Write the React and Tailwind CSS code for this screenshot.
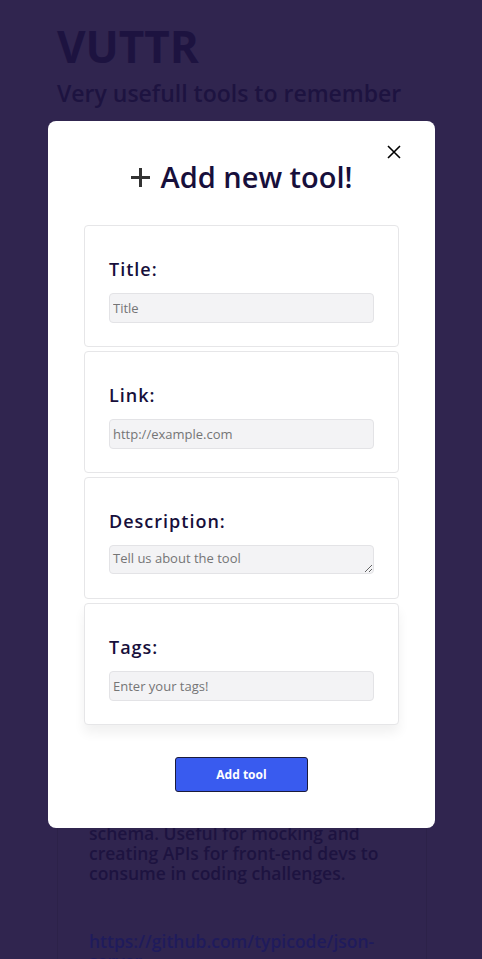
import React from 'react';

const fields = [
    { label: 'Title:', placeholder: 'Title', type: 'input' },
    { label: 'Link:', placeholder: 'http://example.com', type: 'input' },
    { label: 'Description:', placeholder: 'Tell us about the tool', type: 'textarea' },
    { label: 'Tags:', placeholder: 'Enter your tags!', type: 'input' },
];

function App() {
    return (
        <div className="relative min-h-[959px] overflow-hidden bg-[#30254f] font-['Open_Sans',sans-serif]">
            {/* page behind the overlay */}
            <div className="px-[57px] pt-[16px]">
                <h1 className="text-[44px] font-bold leading-[60px] text-[#1d1340]">VUTTR</h1>
                <h2 className="mt-[2px] text-[23px] font-semibold leading-[30px] text-[#1d1340]">Very usefull tools to remember</h2>
                <div className="mt-[695px] w-[370px] border-x border-[#2c2249] px-[31px] pb-10">
                    <p className="text-[17.5px] font-semibold leading-[20px] text-[#1d1340]">
                        Fake REST API based on a json<br />
                        schema. Useful for mocking and<br />
                        creating APIs for front-end devs to<br />
                        consume in coding challenges.
                    </p>
                    <p className="mt-[48px] text-[17.5px] font-semibold leading-[20px] text-[#1f1b5c]">
                        https://github.com/typicode/json-<br />server
                    </p>
                </div>
            </div>

            {/* modal */}
            <div className="absolute left-[48px] top-[121px] h-[707px] w-[387px] rounded-lg bg-white">
                <button className="absolute right-[34px] top-[24px] text-black">
                    <svg width="14" height="14" viewBox="0 0 14 14" fill="none" stroke="currentColor" strokeWidth="1.6">
                        <path d="M1 1l12 12M13 1L1 13" />
                    </svg>
                </button>
                <div className="flex items-center justify-center gap-[9px] pt-[36px]">
                    <svg width="21" height="21" viewBox="0 0 21 21" fill="none" stroke="#333" strokeWidth="3">
                        <path d="M10.5 1v19M1 10.5h19" />
                    </svg>
                    <h2 className="text-[29px] font-semibold leading-[40px] text-[#170f3b]">Add new tool!</h2>
                </div>

                <div className="mx-[36px] mt-[28px] flex flex-col gap-[4px]">
                    {fields.map((f, i) => (
                        <div
                            key={f.label}
                            className={`h-[122px] rounded border border-[#e6e6e8] bg-white px-[24px] pt-[31px] ${i === fields.length - 1 ? 'shadow-[0_8px_12px_rgba(0,0,0,0.06)]' : ''}`}
                        >
                            <label className="block text-[18px] font-semibold leading-[24px] tracking-[1px] text-[#170f3b]">{f.label}</label>
                            {f.type === 'textarea' ? (
                                <textarea
                                    placeholder={f.placeholder}
                                    className="mt-[12px] block h-[29px] w-[265px] rounded border border-[#e3e3e6] bg-[#f3f3f5] px-[3px] py-[3px] text-[13px] leading-[18px] text-[#555] outline-none placeholder:text-[#757575]"
                                />
                            ) : (
                                <input
                                    placeholder={f.placeholder}
                                    className="mt-[12px] block h-[30px] w-[265px] rounded border border-[#e3e3e6] bg-[#f3f3f5] px-[3px] text-[13px] text-[#555] outline-none placeholder:text-[#757575]"
                                />
                            )}
                        </div>
                    ))}
                </div>

                <div className="mt-[32px] flex justify-center">
                    <button className="h-[35px] w-[133px] rounded-[3px] border border-[#1b1b3a] bg-[#395bef] text-[12px] font-bold text-white">
                        Add tool
                    </button>
                </div>
            </div>
        </div>
    );
}

export default App;
